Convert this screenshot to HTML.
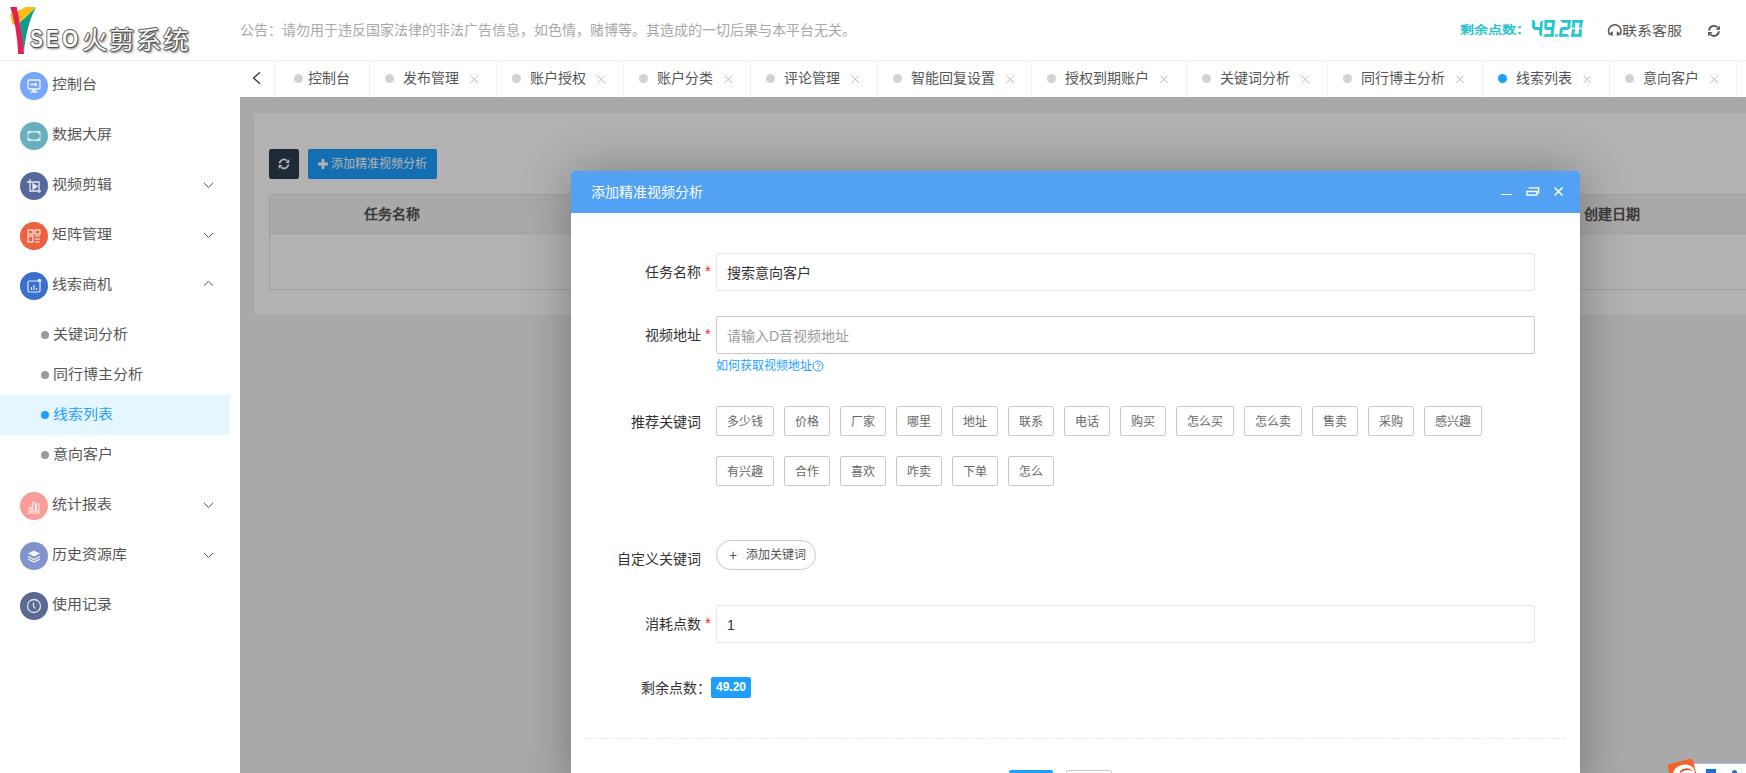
<!DOCTYPE html>
<html lang="zh-CN"><head><meta charset="utf-8">
<style>
*{margin:0;padding:0;box-sizing:border-box}
html,body{width:1746px;height:773px;overflow:hidden;background:#fff;font-family:"Liberation Sans",sans-serif;color:#333}
.a{position:absolute}
#hdr{left:0;top:0;width:1746px;height:61px;background:#fff;border-bottom:1px solid #f0f0f0}
.notice{left:240px;top:21px;font-size:14px;color:#a8a8a8;line-height:18px;white-space:nowrap}
#side{left:0;top:61px;width:240px;height:712px;background:#fff}
.mi{left:0;width:240px;height:50px}
.mi .ic{position:absolute;left:20px;top:50%;margin-top:-14px;width:28px;height:28px;border-radius:50%}
.mi .ic svg{position:absolute;left:0;top:0}
.mi .tx{position:absolute;left:52px;top:50%;margin-top:-12px;font-size:15px;line-height:20px;color:#555;transform:scaleY(.88);transform-origin:0 55%;white-space:nowrap}
.mi .chev{position:absolute;left:203px;top:50%;width:11px;height:11px}
.si{left:0;width:230px;height:40px}
.si .dot{position:absolute;left:41px;top:16px;width:8px;height:8px;border-radius:50%;background:#999}
.si .tx{position:absolute;left:53px;top:9px;font-size:15px;line-height:20px;color:#555;transform:scaleY(.88);transform-origin:0 55%;white-space:nowrap}
#tabs{left:240px;top:61px;width:1506px;height:36px;background:#fff}
.tb{top:61px;height:36px;border-left:1px solid #f0f0f0}
.tb .dot{position:absolute;top:13px;width:9px;height:9px;border-radius:50%;background:#d2d2d2}
.tb .tx{position:absolute;top:7px;font-size:14px;line-height:20px;color:#555;white-space:nowrap}
.tb .x{position:absolute;top:14px;width:9px;height:9px}
#content{left:240px;top:97px;width:1506px;height:676px;background:#f2f2f2;overflow:hidden}
#ov{left:240px;top:97px;width:1506px;height:676px;background:rgba(0,0,0,.3)}
#modal{left:571px;top:171px;width:1009px;height:620px;background:#fff;border-radius:2px;box-shadow:1px 1px 50px rgba(0,0,0,.3);overflow:hidden}
#mh{left:0;top:0;width:1009px;height:42px;background:#51a2f5;border-radius:2px 2px 0 0}
.lbl{font-size:14px;line-height:20px;color:#333;white-space:nowrap;text-align:right}
.req{color:#f52a2a;font-size:15px;line-height:16px}
.inp{background:#fff;border:1px solid #e6e6e6;border-radius:2px;height:38px;width:819px;left:145px}
.inp span{position:absolute;left:10px;top:9px;font-size:14px;line-height:20px;color:#333}
.kw{height:30px;border:1px solid #c9c9c9;border-radius:2px;font-size:12px;color:#666;line-height:30px;text-align:center;white-space:nowrap}
.logo{font-size:25px;line-height:34px;color:#fbfbfb;text-shadow:-1px 0 #505050,1px 0 #505050,0 -1px #505050,0 1px #505050,1px 1px 2px rgba(0,0,0,.7),2px 2px 3px rgba(0,0,0,.35);white-space:nowrap}
</style></head><body>

<div id="hdr" class="a"></div>
<div class="a notice">公告：请勿用于违反国家法律的非法广告信息，如色情，赌博等。其造成的一切后果与本平台无关。</div>

<div id="side" class="a"></div>
<!-- LOGO -->
<svg class="a" style="left:0;top:0" width="40" height="60" viewBox="0 0 40 60">
  <path d="M10 14.6 L14.5 12.8 L25.6 6.9 L36 6.9 L24.2 18.7 L21 21 L14.8 24.4 L12.4 24.4 Z" fill="#fbbd14"/>
  <path d="M36 7.3 Q27.5 22 24 50 L21 44 L20 22 L24.2 18.7 Z" fill="#0f9a86"/>
  <path d="M10.3 6.9 L16.7 6.9 Q20.5 24 24.2 53.9 L18.2 53.9 Q16.8 26 10.3 6.9 Z" fill="#e71d55"/>
</svg>
<div class="a logo" style="left:30px;top:22px;font-size:24px;font-weight:bold;transform-origin:0 0;transform:scaleX(.80)">S</div>
<div class="a logo" style="left:46px;top:22px;font-size:24px;font-weight:bold;transform-origin:0 0;transform:scaleX(.80)">E</div>
<div class="a logo" style="left:62px;top:22px;font-size:24px;font-weight:bold;transform-origin:0 0;transform:scaleX(.86)">O</div>
<div class="a logo" style="left:82px;top:23px;font-size:25.5px;font-weight:500;letter-spacing:1px">火剪系统</div>
<!-- SIDEBAR -->
<div class="a mi" style="top:61px">
  <div class="ic" style="background:#78a6fb"><svg width="28" height="28" viewBox="0 0 28 28" fill="none" stroke="#fff" stroke-width="1.3" opacity=".9"><rect x="8" y="8" width="12" height="9" rx="1"/><path d="M10.5 12.5h6M15 11l1.5 1.5-1.5 1.5"/><path d="M11.5 20l2.5-2.5 2.5 2.5z"/></svg></div>
  <div class="tx">控制台</div>
</div>
<div class="a mi" style="top:111px">
  <div class="ic" style="background:#6aafbd"><svg width="28" height="28" viewBox="0 0 28 28"><rect x="7.5" y="9" width="13" height="10" fill="#fff" opacity=".75"/><ellipse cx="14" cy="14" rx="6" ry="3.8" fill="#6aafbd"/></svg></div>
  <div class="tx">数据大屏</div>
</div>
<div class="a mi" style="top:161px">
  <div class="ic" style="background:#57699b"><svg width="28" height="28" viewBox="0 0 28 28" fill="none" stroke="#fff" stroke-width="1.3" opacity=".85"><path d="M10 7v12h11M7 10h12v11"/><path d="M13 12v5l4-2.5z" fill="#fff"/></svg></div>
  <div class="tx">视频剪辑</div>
  <svg class="chev" viewBox="0 0 11 11" style="margin-top:-5px"><path d="M1 2L5.5 6.5L10 2" fill="none" stroke="#555" stroke-width="1"/></svg>
</div>
<div class="a mi" style="top:211px">
  <div class="ic" style="background:#ec6241"><svg width="28" height="28" viewBox="0 0 28 28" fill="none" stroke="#fff" stroke-width="1.2" opacity=".85"><rect x="8" y="8" width="5" height="4"/><rect x="15" y="8" width="5" height="4"/><rect x="8" y="14" width="5" height="6"/><path d="M15 14h5M15 17h5M15 20h5"/></svg></div>
  <div class="tx">矩阵管理</div>
  <svg class="chev" viewBox="0 0 11 11" style="margin-top:-5px"><path d="M1 2L5.5 6.5L10 2" fill="none" stroke="#555" stroke-width="1"/></svg>
</div>
<div class="a mi" style="top:261px">
  <div class="ic" style="background:#3c6fcd"><svg width="28" height="28" viewBox="0 0 28 28" fill="none" stroke="#fff" stroke-width="1.2" opacity=".85"><rect x="8" y="9" width="12" height="11" rx="1.5"/><path d="M11.5 18v-3M14 18v-5M16.5 18v-2"/><circle cx="19.5" cy="8.5" r="1.2" fill="#fff"/></svg></div>
  <div class="tx">线索商机</div>
  <svg class="chev" viewBox="0 0 11 11" style="margin-top:-6px"><path d="M1 5.7L5.5 1.3L10 5.7" fill="none" stroke="#555" stroke-width="1"/></svg>
</div>
<div class="a si" style="top:315px"><div class="dot"></div><div class="tx">关键词分析</div></div>
<div class="a si" style="top:355px"><div class="dot"></div><div class="tx">同行博主分析</div></div>
<div class="a si" style="top:395px;background:#e6f6fe"><div class="dot" style="background:#1e9fff"></div><div class="tx" style="color:#1e9fff">线索列表</div></div>
<div class="a si" style="top:435px"><div class="dot"></div><div class="tx">意向客户</div></div>
<div class="a mi" style="top:481px">
  <div class="ic" style="background:#f89d9a"><svg width="28" height="28" viewBox="0 0 28 28" fill="none" stroke="#fff" stroke-width="1.1" opacity=".8"><rect x="9" y="15" width="2.6" height="4.5" rx="1.3"/><rect x="12.7" y="10" width="2.6" height="9.5" rx="1.3"/><rect x="16.4" y="11.5" width="2.6" height="8" rx="1.3"/><path d="M8 21h12"/></svg></div>
  <div class="tx">统计报表</div>
  <svg class="chev" viewBox="0 0 11 11" style="margin-top:-5px"><path d="M1 2L5.5 6.5L10 2" fill="none" stroke="#555" stroke-width="1"/></svg>
</div>
<div class="a mi" style="top:531px">
  <div class="ic" style="background:#8193cc"><svg width="28" height="28" viewBox="0 0 28 28"><path d="M14 8.5l6 3-6 3-6-3z" fill="#fff" opacity=".9"/><path d="M8 14.5l6 3 6-3M8 17l6 3 6-3" fill="none" stroke="#fff" stroke-width="1.2" opacity=".9"/></svg></div>
  <div class="tx">历史资源库</div>
  <svg class="chev" viewBox="0 0 11 11" style="margin-top:-5px"><path d="M1 2L5.5 6.5L10 2" fill="none" stroke="#555" stroke-width="1"/></svg>
</div>
<div class="a mi" style="top:581px">
  <div class="ic" style="background:#5b6a92"><svg width="28" height="28" viewBox="0 0 28 28" fill="none" stroke="#fff" stroke-width="1.3" opacity=".8"><circle cx="14" cy="14" r="6.5"/><path d="M13.5 10.5v4l2 2"/></svg></div>
  <div class="tx">使用记录</div>
</div>

<div id="tabs" class="a"></div>
<svg class="a" style="left:250px;top:70px" width="14" height="16" viewBox="0 0 14 16"><path d="M10 2.3 L3.6 8 L10 13.7" fill="none" stroke="#333" stroke-width="1.3"/></svg>
<div class="a tb" style="left:274px;width:95px"><div class="dot" style="left:19px"></div><div class="tx" style="left:32.5px">控制台</div></div>
<div class="a tb" style="left:369px;width:127px"><div class="dot" style="left:15px"></div><div class="tx" style="left:32.5px">发布管理</div><svg class="x" style="left:99.5px" viewBox="0 0 9 9"><path d="M0.5 0.5L8 8M8 0.5L0.5 8" stroke="#bdbdbd" stroke-width="1"/></svg></div>
<div class="a tb" style="left:496px;width:127px"><div class="dot" style="left:15px"></div><div class="tx" style="left:32.5px">账户授权</div><svg class="x" style="left:99.5px" viewBox="0 0 9 9"><path d="M0.5 0.5L8 8M8 0.5L0.5 8" stroke="#bdbdbd" stroke-width="1"/></svg></div>
<div class="a tb" style="left:623px;width:127px"><div class="dot" style="left:15px"></div><div class="tx" style="left:32.5px">账户分类</div><svg class="x" style="left:99.5px" viewBox="0 0 9 9"><path d="M0.5 0.5L8 8M8 0.5L0.5 8" stroke="#bdbdbd" stroke-width="1"/></svg></div>
<div class="a tb" style="left:750px;width:127px"><div class="dot" style="left:15px"></div><div class="tx" style="left:32.5px">评论管理</div><svg class="x" style="left:99.5px" viewBox="0 0 9 9"><path d="M0.5 0.5L8 8M8 0.5L0.5 8" stroke="#bdbdbd" stroke-width="1"/></svg></div>
<div class="a tb" style="left:877px;width:154px"><div class="dot" style="left:15px"></div><div class="tx" style="left:32.5px">智能回复设置</div><svg class="x" style="left:127.5px" viewBox="0 0 9 9"><path d="M0.5 0.5L8 8M8 0.5L0.5 8" stroke="#bdbdbd" stroke-width="1"/></svg></div>
<div class="a tb" style="left:1031px;width:155px"><div class="dot" style="left:15px"></div><div class="tx" style="left:32.5px">授权到期账户</div><svg class="x" style="left:127.5px" viewBox="0 0 9 9"><path d="M0.5 0.5L8 8M8 0.5L0.5 8" stroke="#bdbdbd" stroke-width="1"/></svg></div>
<div class="a tb" style="left:1186px;width:141px"><div class="dot" style="left:15px"></div><div class="tx" style="left:32.5px">关键词分析</div><svg class="x" style="left:113.5px" viewBox="0 0 9 9"><path d="M0.5 0.5L8 8M8 0.5L0.5 8" stroke="#bdbdbd" stroke-width="1"/></svg></div>
<div class="a tb" style="left:1327px;width:155px"><div class="dot" style="left:15px"></div><div class="tx" style="left:32.5px">同行博主分析</div><svg class="x" style="left:127.5px" viewBox="0 0 9 9"><path d="M0.5 0.5L8 8M8 0.5L0.5 8" stroke="#bdbdbd" stroke-width="1"/></svg></div>
<div class="a tb" style="left:1482px;width:127px"><div class="dot" style="left:15px;background:#1e9fff"></div><div class="tx" style="left:32.5px">线索列表</div><svg class="x" style="left:99.5px" viewBox="0 0 9 9"><path d="M0.5 0.5L8 8M8 0.5L0.5 8" stroke="#bdbdbd" stroke-width="1"/></svg></div>
<div class="a tb" style="left:1609px;width:127px"><div class="dot" style="left:15px"></div><div class="tx" style="left:32.5px">意向客户</div><svg class="x" style="left:99.5px" viewBox="0 0 9 9"><path d="M0.5 0.5L8 8M8 0.5L0.5 8" stroke="#bdbdbd" stroke-width="1"/></svg></div>
<div class="a tb" style="left:1736px;width:10px"></div>
<!-- header right -->
<div class="a" style="left:1460px;top:20px;font-size:14px;line-height:20px;font-weight:bold;transform:scaleY(.82);transform-origin:0 55%;color:#2ec3cc;white-space:nowrap">剩余点数：</div>
<svg class="a" style="left:1525px;top:15px" width="65" height="27" viewBox="0 0 1746 725" preserveAspectRatio="none" fill="#24c8ce">
 <polygon points="190,135 232,135 275,190 275,325 190,325"/>
 <polygon points="190,320 468,320 462,400 250,400 190,345"/>
 <polygon points="468,135 478,135 470,330 400,330 405,195"/>
 <polygon points="385,380 462,380 452,580 432,580 380,528"/>
 <polygon points="530,135 805,135 800,210 528,210"/>
 <polygon points="528,135 600,135 592,330 520,330"/>
 <polygon points="725,135 805,135 792,330 718,330"/>
 <polygon points="520,320 790,320 780,400 560,400 520,360"/>
 <polygon points="695,380 778,380 770,585 690,585"/>
 <polygon points="540,510 770,510 765,585 485,585"/>
 <polygon points="812,515 885,515 880,582 810,582"/>
 <polygon points="940,135 1230,135 1222,210 1000,210"/>
 <polygon points="1150,135 1230,135 1215,340 1140,340"/>
 <polygon points="990,325 1212,325 1205,355 1150,400 1010,400 940,390 950,350"/>
 <polygon points="935,370 1010,370 1000,585 920,585"/>
 <polygon points="920,510 1140,510 1195,585 915,585"/>
 <polygon points="1280,135 1555,135 1548,210 1280,210"/>
 <polygon points="1275,135 1355,135 1345,340 1265,340"/>
 <polygon points="1470,135 1555,135 1530,340 1455,340"/>
 <polygon points="1265,380 1345,380 1320,585 1240,585"/>
 <polygon points="1450,380 1530,380 1515,585 1435,585"/>
 <polygon points="1240,510 1520,510 1515,585 1240,585"/>
</svg>
<svg class="a" style="left:1607px;top:23px" width="16" height="14" viewBox="0 0 16 14"><path d="M2.97 12.15 A6.3 6.3 0 1 1 12.63 12.15" fill="none" stroke="#595959" stroke-width="1.6"/><path d="M5.8 8.2V12.8H4.8L2.6 10.8 3.5 9.5Z M9.8 8.2V12.8H10.8L13 10.8 12.1 9.5Z" fill="#595959"/></svg>
<div class="a" style="left:1622px;top:21px;font-size:15px;line-height:20px;transform:scaleY(.86);transform-origin:0 50%;color:#555;white-space:nowrap">联系客服</div>
<svg class="a" style="left:1700px;top:18px" width="28" height="24" viewBox="0 0 28 24"><path d="M9.1 12.5 A4.9 4.9 0 0 1 17.5 9.4 M18.9 13.3 A4.9 4.9 0 0 1 10.5 16.4" fill="none" stroke="#555" stroke-width="1.9"/><path d="M19.9 7.4V11.8H15.5Z M8.1 14.1H12.5L8.1 18.5Z" fill="#555"/></svg>

<div id="content" class="a">
  <div class="a" style="left:14px;top:16px;width:1500px;height:202px;background:#fff;border-radius:2px"></div>
  <div class="a" style="left:29px;top:52px;width:30px;height:30px;background:#2c3e50;border-radius:2px"><svg class="a" style="left:1.2px;top:1.7px;transform:scale(.9);transform-origin:14px 12.9px" width="28" height="24" viewBox="0 0 28 24"><path d="M9.1 12.5 A4.9 4.9 0 0 1 17.5 9.4 M18.9 13.3 A4.9 4.9 0 0 1 10.5 16.4" fill="none" stroke="#fff" stroke-width="1.9"/><path d="M19.9 7.4V11.8H15.5Z M8.1 14.1H12.5L8.1 18.5Z" fill="#fff"/></svg></div>
  <div class="a" style="left:68px;top:52px;width:129px;height:30px;background:#1e9fff;border-radius:2px;color:#fff;font-size:12px;line-height:30px;white-space:nowrap"><svg style="position:absolute;left:10px;top:9.5px" width="10" height="10" viewBox="0 0 10 10"><path d="M3.6 0h2.8v3.6H10v2.8H6.4V10H3.6V6.4H0V3.6h3.6z" fill="#fff"/></svg><span style="position:absolute;left:23px;top:0;font-weight:500">添加精准视频分析</span></div>
  <div class="a" style="left:29px;top:97px;width:1500px;height:96px;border:1px solid #e6e6e6;background:#fff"></div>
  <div class="a" style="left:30px;top:98px;width:1499px;height:39px;background:#f2f2f2;border-bottom:1px solid #e6e6e6"></div>
  <div class="a" style="left:124px;top:107px;font-size:14px;line-height:20px;font-weight:bold;color:#555;white-space:nowrap">任务名称</div>
  <div class="a" style="left:1344px;top:107px;font-size:14px;line-height:20px;font-weight:bold;color:#555;white-space:nowrap">创建日期</div>
</div>
<div id="ov" class="a"></div>

<div id="modal" class="a">
  <div id="mh" class="a">
    <div class="a" style="left:20px;top:11px;font-size:14px;line-height:20px;color:#fff;font-weight:500;white-space:nowrap">添加精准视频分析</div>
    <div class="a" style="left:930px;top:22.6px;width:11px;height:1.7px;background:#fff"></div>
    <svg class="a" style="left:954px;top:15px" width="16" height="12" viewBox="0 0 16 12" fill="none" stroke="#fff" stroke-width="1.4"><rect x="1.9" y="5.5" width="9.9" height="3.6"/><path d="M3.5 1.9H13.6V8"/></svg>
    <svg class="a" style="left:982px;top:15px" width="11" height="11" viewBox="0 0 11 11" stroke="#fff" stroke-width="1.5"><path d="M1.5 1.5L9.5 9.5M9.5 1.5L1.5 9.5"/></svg>
  </div>
  <div class="a lbl" style="left:74px;top:91px">任务名称</div><div class="a req" style="left:134px;top:92px">*</div>
  <div class="a inp" style="top:82px"><span>搜索意向客户</span></div>
  <div class="a lbl" style="left:74px;top:154px">视频地址</div><div class="a req" style="left:134px;top:155px">*</div>
  <div class="a inp" style="top:145px;border-color:#c9c9c9"><span style="color:#999">请输入D音视频地址</span></div>
  <div class="a" style="left:145px;top:187px;font-size:12px;line-height:16px;color:#1e9fff;white-space:nowrap">如何获取视频地址<svg style="vertical-align:-2px" width="12" height="12" viewBox="0 0 12 12"><circle cx="6" cy="6" r="5" fill="none" stroke="#1e9fff" stroke-width="1"/><text x="6" y="9" font-size="8.5" text-anchor="middle" fill="#1e9fff" font-family="Liberation Sans">?</text></svg></div>
  <div class="a lbl" style="left:60px;top:241px">推荐关键词</div>
  <div class="a kw" style="left:145px;top:235px;width:58px">多少钱</div>
  <div class="a kw" style="left:213px;top:235px;width:46px">价格</div>
  <div class="a kw" style="left:269px;top:235px;width:46px">厂家</div>
  <div class="a kw" style="left:325px;top:235px;width:46px">哪里</div>
  <div class="a kw" style="left:381px;top:235px;width:46px">地址</div>
  <div class="a kw" style="left:437px;top:235px;width:46px">联系</div>
  <div class="a kw" style="left:493px;top:235px;width:46px">电话</div>
  <div class="a kw" style="left:549px;top:235px;width:46px">购买</div>
  <div class="a kw" style="left:605px;top:235px;width:58px">怎么买</div>
  <div class="a kw" style="left:673px;top:235px;width:58px">怎么卖</div>
  <div class="a kw" style="left:741px;top:235px;width:46px">售卖</div>
  <div class="a kw" style="left:797px;top:235px;width:46px">采购</div>
  <div class="a kw" style="left:853px;top:235px;width:58px">感兴趣</div>
  <div class="a kw" style="left:145px;top:285px;width:58px">有兴趣</div>
  <div class="a kw" style="left:213px;top:285px;width:46px">合作</div>
  <div class="a kw" style="left:269px;top:285px;width:46px">喜欢</div>
  <div class="a kw" style="left:325px;top:285px;width:46px">咋卖</div>
  <div class="a kw" style="left:381px;top:285px;width:46px">下单</div>
  <div class="a kw" style="left:437px;top:285px;width:46px">怎么</div>
  <div class="a lbl" style="left:46px;top:378px">自定义关键词</div>
  <div class="a" style="left:145px;top:369px;width:100px;height:30px;border:1px solid #c9c9c9;border-radius:15px;font-size:12px;line-height:28px;color:#555;white-space:nowrap"><span style="position:absolute;left:12px;top:0;font-size:14px">+</span><span style="position:absolute;left:29px;top:0">添加关键词</span></div>
  <div class="a lbl" style="left:74px;top:443px">消耗点数</div><div class="a req" style="left:134px;top:444px">*</div>
  <div class="a inp" style="top:434px"><span>1</span></div>
  <div class="a lbl" style="left:70px;top:507px">剩余点数：</div>
  <div class="a" style="left:140px;top:506px;width:40px;height:21px;background:#1e9fff;border-radius:2px;color:#fff;font-size:12px;font-weight:bold;line-height:21px;text-align:center">49.20</div>
  <div class="a" style="left:14px;top:567px;width:980px;height:0;border-top:1px dashed #e9e9e9"></div>
  <div class="a" style="left:438px;top:599px;width:44px;height:30px;background:#1e9fff;border-radius:2px"></div>
  <div class="a" style="left:495px;top:599px;width:46px;height:30px;border:1px solid #c9c9c9;border-radius:2px"></div>
</div>

<!-- sogou ime -->
<div class="a" style="left:1694px;top:763px;width:52px;height:10px;background:#fff;border-top:1px solid #aac4e8"></div>
<div class="a" style="left:1670px;top:761px;width:26px;height:26px;background:#f4622a;border-radius:3px;transform:rotate(-14deg);overflow:hidden"><div style="position:absolute;left:3px;top:4px;width:22px;height:16px;background:#fff;border-radius:50% 50% 0 0"></div><div style="position:absolute;left:9px;top:8px;width:14px;height:12px;border-top:2px solid #f33a10;border-radius:50% 50% 0 0"></div></div>
<div class="a" style="left:1706px;top:769px;width:10px;height:4px;background:#1a6fd8"></div>
<div class="a" style="left:1732px;top:770px;width:5px;height:3px;background:#1a6fd8;border-radius:3px 3px 0 0"></div>


</body></html>
